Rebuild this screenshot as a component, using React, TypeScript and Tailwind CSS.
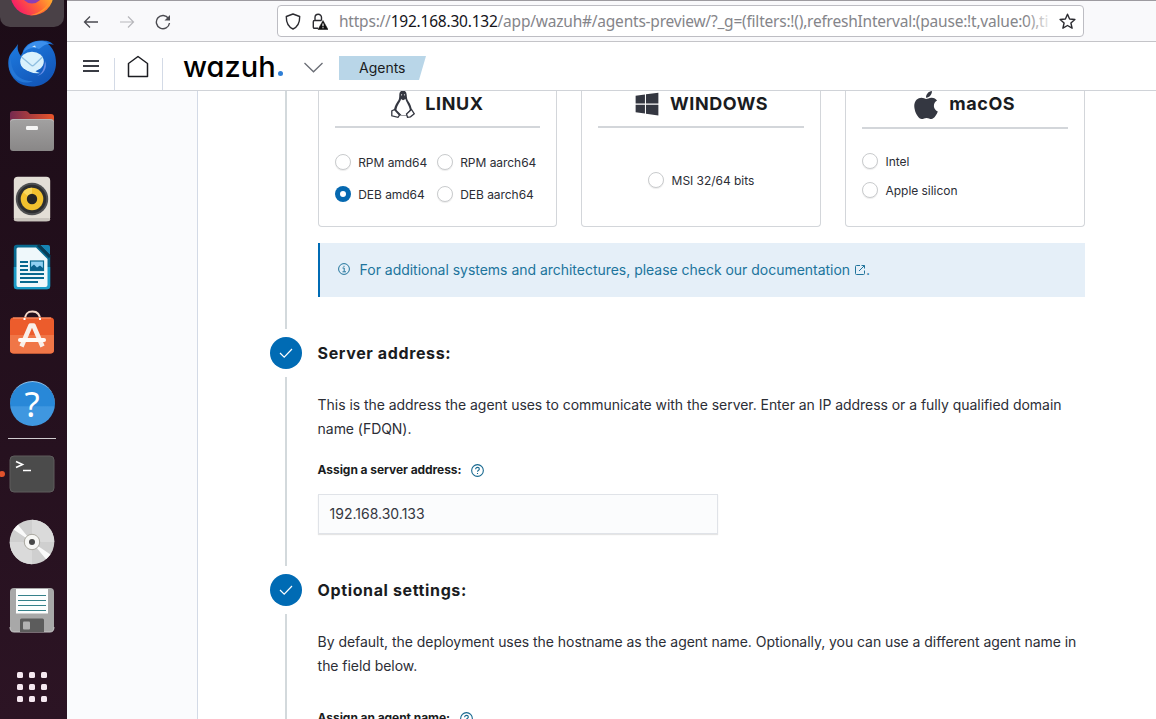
import React from "react";
import { FaApple, FaWindows } from "react-icons/fa";

function DockTile({ children }: { children: React.ReactNode }) {
  return <div className="flex h-[68px] w-16 shrink-0 items-center justify-center">{children}</div>;
}

function FirefoxIcon() {
  return (
    <svg className="h-[44px] w-[44px] shrink-0" viewBox="0 0 44 44">
      <defs>
        <linearGradient id="ff" x1="0.9" y1="0.4" x2="0.15" y2="0.95">
          <stop offset="0" stopColor="#ffbd2e" />
          <stop offset="0.45" stopColor="#ff6a33" />
          <stop offset="1" stopColor="#f5156c" />
        </linearGradient>
      </defs>
      <circle cx="22" cy="22" r="21.500" fill="url(#ff)" />
      <path d="M42 26C38 38 28 43.500 20 43.300C32 41 38 33 42 26Z" fill="#ff9a2c" />
      <circle cx="22" cy="21" r="10.500" fill="#8a3fb5" />
    </svg>
  );
}

function ThunderbirdIcon() {
  return (
    <svg className="h-12 w-12" viewBox="0 0 48 48">
      <defs>
        <linearGradient id="tb" x1="0" y1="0" x2="0.6" y2="1">
          <stop offset="0" stopColor="#1f7fe4" />
          <stop offset="1" stopColor="#1256b8" />
        </linearGradient>
      </defs>
      <path d="M10 5C8 9 4 12 2 16C-1 22 0 31 4 37C8 44 16 47.500 24 47.500C38 47.500 48 37 48 24C48 15 45 9 40 5C42 5 44 5 46 6C42 2 38 1.500 33 1.500C25 1.500 18 5 15 12C15 14 13 15 13 17C10 13 9 10 10 5Z" fill="url(#tb)" />
      <path d="M15 14C18 6 25 2 33 2C36 2 39 3 41 5C37 5 34 8 31 10C26 8 19 9 15 14Z" fill="#3b8fec" />
      <path d="M24 7.500L27 6.500L28 8.500Z" fill="#d5ecfa" />
      <path d="M3 18C2 33 12 43 25 42C14 47 2 39 1 27Z" fill="#2577d6" />
      <ellipse cx="24" cy="22.500" rx="11.800" ry="9.800" fill="#d9f1fc" />
      <path d="M13.500 18L23 26C24 27 25 27 26 26L34.500 18" fill="none" stroke="#8fbfe0" strokeWidth="1.300" />
      <path d="M16 29C20 33 26 35 32 34C28 33 27 32 27 31Z" fill="#d9f1fc" />
      <path d="M35 31C36 28 37 25 37 22C40 29 35 36 29 37C33 35 34 33 35 31Z" fill="#6b8fe6" />
    </svg>
  );
}

function FilesIcon() {
  return (
    <svg className="h-[42px] w-[46px]" viewBox="0 0 46 42">
      <defs>
        <linearGradient id="fb" x1="0" x2="1">
          <stop offset="0" stopColor="#75294f" />
          <stop offset="1" stopColor="#e9552a" />
        </linearGradient>
        <linearGradient id="fg" x1="0" y1="0" x2="0" y2="1">
          <stop offset="0" stopColor="#a2a1a1" />
          <stop offset="1" stopColor="#898787" />
        </linearGradient>
      </defs>
      <path d="M1 4Q1 1 4 1H17Q18.500 1 19.500 2.500L21 4H42Q45 4 45 7V20H1Z" fill="url(#fb)" />
      <path d="M1 12Q1 9 4 9H17Q19 9 20.500 9H42Q45 9 45 12V38Q45 41 42 41H4Q1 41 1 38Z" fill="url(#fg)" />
      <path d="M1.500 11.500Q2.500 9.500 5 9.500H41Q43.500 9.500 44.500 11.500" fill="none" stroke="#bdbcbc" strokeWidth="0.800" />
      <rect x="17" y="16" width="12" height="4" rx="1.200" fill="#f5f5f5" />
    </svg>
  );
}

function RhythmboxIcon() {
  return (
    <svg className="h-[46px] w-[38px]" viewBox="0 0 38 46">
      <rect x="0.800" y="0.800" width="36.400" height="44.400" rx="4" fill="#e3ded6" />
      <rect x="0.800" y="42" width="36.400" height="3.200" rx="2" fill="#c9c4bd" />
      <circle cx="19" cy="23" r="16.200" fill="#4f5052" />
      <circle cx="19" cy="23" r="14.300" fill="#2d2e30" />
      <circle cx="19" cy="23" r="11.300" fill="#f2c12e" />
      <path d="M19 23L10 16.200A11.300 11.300 0 0 1 19 11.700Z" fill="#f8d65b" />
      <circle cx="19" cy="23" r="5.200" fill="#252525" />
    </svg>
  );
}

function WriterIcon() {
  return (
    <svg className="h-[46px] w-[38px]" viewBox="0 0 38 46">
      <path d="M4 0.800H25L37.200 13V42Q37.200 45.200 34 45.200H4Q0.800 45.200 0.800 42V4Q0.800 0.800 4 0.800Z" fill="#08698f" />
      <path d="M0.800 23H37.200V42Q37.200 45.200 34 45.200H4Q0.800 45.200 0.800 42Z" fill="#1c9cc7" />
      <path d="M5 3.500H23L34.500 15V41Q34.500 43 32.500 43H5Q3.500 43 3.500 41V5Q3.500 3.500 5 3.500Z" fill="#eff8fb" />
      <path d="M27 1H35Q37 1 37 3V11Z" fill="#1684b5" />
      <path d="M25 1L37 13" stroke="#073c55" strokeWidth="3" />
      <path d="M7 18H15M7 22H15M7 26H15M7 30H31M7 34H31M7 38H25" stroke="#08698f" strokeWidth="2" />
      <rect x="17.500" y="17" width="13" height="9.500" fill="#8ed0f2" stroke="#08698f" strokeWidth="1.200" />
      <path d="M18 26V23L21 20.500L24 23.500L27 21.500L30 24V26Z" fill="#08618c" />
    </svg>
  );
}

function SoftwareIcon() {
  return (
    <svg className="mb-[6px] h-[44px] w-[46px]" viewBox="0 0 46 44">
      <path d="M16 10C16 3 19 1.500 23.500 1.500C28 1.500 31 4 31 10" fill="none" stroke="#f5d8c8" strokeWidth="2" />
      <rect x="1" y="7.500" width="44" height="36" rx="3.500" fill="#ec5c2c" />
      <path d="M1 25H45V39.500Q45 43.500 41 43.500H5Q1 43.500 1 39.500Z" fill="#f07647" />
      <path d="M4 8H42" stroke="#ff9a73" strokeWidth="1" />
      <path d="M15.500 8V10M31 8V10" stroke="#fff" strokeWidth="2" />
      <path d="M12.500 36.500L21.500 15.500H24.500L33.500 36.500" fill="none" stroke="#f9efe9" strokeWidth="4.500" strokeLinejoin="round" />
      <path d="M11 30H35" stroke="#fffaf6" strokeWidth="4" strokeLinecap="round" />
    </svg>
  );
}

function HelpIcon() {
  return (
    <div className="flex h-[45px] w-[45px] items-center justify-center rounded-full border-t border-[#8ec2ec] bg-linear-to-b from-[#2888d8] from-55% to-[#3f97e0] to-56%">
      <span className="font-['Noto_Sans'] text-[35px] leading-none text-white">?</span>
    </div>
  );
}

function TerminalIcon() {
  return (
    <svg className="h-[38px] w-[46px]" viewBox="0 0 46 38">
      <rect x="1" y="1" width="44" height="36" rx="4" fill="#4b4b4b" stroke="#5e5d5d" />
      <path d="M7 6.500L13.500 9.500L7 12.500" fill="none" stroke="#fff" strokeWidth="1.600" />
      <path d="M14 15.500H22" stroke="#fff" strokeWidth="1.500" />
    </svg>
  );
}

function DiscIcon() {
  return (
    <svg className="h-[46px] w-[46px]" viewBox="0 0 46 46">
      <circle cx="23" cy="23" r="22.300" fill="#cfcfcf" />
      <path d="M23 23L23 0.700A22.300 22.300 0 0 1 45.300 23Z" fill="#dadada" />
      <path d="M23 23L23 45.300A22.300 22.300 0 0 1 .7 23Z" fill="#dadada" />
      <path d="M23 23L4.500 10.500L9 5.800ZM23 23L41.500 35.500L37 40.200Z" fill="#fafafa" />
      <circle cx="23" cy="23" r="7.700" fill="#f7f7f5" stroke="#a9a79f" strokeWidth="1" />
      <circle cx="23" cy="23" r="3" fill="#484848" />
    </svg>
  );
}

function FloppyIcon() {
  return (
    <svg className="h-[46px] w-[46px]" viewBox="0 0 46 46">
      <rect x="1" y="1" width="44" height="44" rx="4" fill="#a8a8a8" />
      <path d="M1 40Q1 45 5 45H41Q45 45 45 40" fill="none" stroke="#c6c6c6" />
      <rect x="7" y="2" width="32" height="24.500" fill="#fcfefe" />
      <path d="M9 8.500H37M9 13.500H37M9 18.500H37M9 23.500H37" stroke="#34818a" strokeWidth="1" />
      <path d="M11 45V33Q11 31.500 12.500 31.500H33.500Q35 31.500 35 33V45Z" fill="#5c5c5c" />
      <rect x="14" y="34.500" width="7" height="8" rx="1" fill="#b2b2b2" />
    </svg>
  );
}

function Dock() {
  return (
    <aside className="relative flex h-full w-[67px] shrink-0 flex-col bg-linear-to-b from-[#1c0c17] to-[#2c1424]">
      <div className="h-[29px] w-16 shrink-0">
        <div className="flex h-[27px] items-end justify-center overflow-hidden rounded-b-[10px] bg-[#4a4147] pb-[11px]">
          <FirefoxIcon />
        </div>
      </div>
      <DockTile><ThunderbirdIcon /></DockTile>
      <DockTile><FilesIcon /></DockTile>
      <DockTile><RhythmboxIcon /></DockTile>
      <DockTile><WriterIcon /></DockTile>
      <DockTile><SoftwareIcon /></DockTile>
      <DockTile><HelpIcon /></DockTile>
      <div className="mx-2 mt-px mb-px h-px w-12 shrink-0 bg-[#d0cbce]" />
      <div className="relative">
        <DockTile><TerminalIcon /></DockTile>
        <span className="absolute top-[31px] -left-px h-1.5 w-1.5 rounded-full bg-[#e2522c]" />
      </div>
      <DockTile><DiscIcon /></DockTile>
      <DockTile><FloppyIcon /></DockTile>
      <div className="mt-[28px] ml-[17px] grid w-[30px] grid-cols-3 gap-1.5">
        {Array.from({ length: 9 }, (_, i) => (
          <span key={i} className="h-1.5 w-1.5 rounded-[1.5px] bg-[#f5e8f0]" />
        ))}
      </div>
    </aside>
  );
}

function BrowserBar() {
  return (
    <div className="flex h-[42px] shrink-0 items-center border-t border-b border-t-[#9d9ba0] border-b-[#c4c4c8] bg-[#f9f9fb]">
      <svg className="mt-0.5 ml-4 h-4 w-4" viewBox="0 0 16 16" fill="none" stroke="#4a4a50" strokeWidth="1.300">
        <path d="M15 8H1.500M7 2.500L1.500 8L7 13.500" />
      </svg>
      <svg className="mt-0.5 ml-5 h-4 w-4" viewBox="0 0 16 16" fill="none" stroke="#b7b7bb" strokeWidth="1.200">
        <path d="M1 8H14.500M9 2.500L14.500 8L9 13.500" />
      </svg>
      <svg className="mt-0.5 ml-5 h-4 w-4" viewBox="0 0 16 16" fill="none" stroke="#4a4a50" strokeWidth="1.400">
        <path d="M13.500 4.500A6.600 6.600 0 1 0 14.500 9" />
        <path d="M15 1V6.500H9.500Z" fill="#4a4a50" stroke="none" />
      </svg>
      <div className="ml-[106px] flex h-8 w-[807px] items-center rounded-[4px] border border-[#bdbdc3] bg-white">
        <svg className="ml-[7px] h-[17px] w-4 shrink-0" viewBox="0 0 16 17" fill="none" stroke="#2b2b30" strokeWidth="1.400">
          <path d="M8 1L14.700 3.500C14.800 9.500 13.500 13.500 8 16C2.500 13.500 1.200 9.500 1.300 3.500Z" strokeLinejoin="round" />
        </svg>
        <svg className="ml-[11px] h-[17px] w-4 shrink-0" viewBox="0 0 16 17">
          <path d="M6 15.300H2.500Q1.300 15.300 1.300 14V8.700Q1.300 7.500 2.500 7.500H9.500M3 7.500V4.500A3.200 3.200 0 0 1 9.500 4.500V7.500" fill="none" stroke="#2b2b30" strokeWidth="1.400" />
          <path d="M11 7.500L16 16.500H6Z" fill="#111" stroke="#111" strokeLinejoin="round" strokeWidth="0.500" />
          <path d="M11 10.500V13.200M11 14.200V15.200" stroke="#fff" strokeWidth="1.200" />
        </svg>
        <div className="relative mt-0.5 ml-[11px] w-[715px] overflow-hidden font-['Noto_Sans'] text-[15.5px] tracking-[-0.22px] whitespace-nowrap text-[#85858a]">
          <span>https://</span>
          <span className="text-[#15141a]">192.168.30.132</span>
          <span>/app/wazuh#/agents-preview/?_g=(filters:!(),refreshInterval:(pause:!t,value:0),ti</span>
          <span className="absolute inset-y-0 right-0 w-7 bg-linear-to-r from-transparent to-white" />
        </div>
        <svg className="ml-[5px] h-[17px] w-[17px] shrink-0" viewBox="0 0 17 17" fill="none" stroke="#2b2b30" strokeWidth="1.400" strokeLinejoin="round">
          <path d="M8.500 1.200L10.600 6L15.900 6.500L11.900 10L13.100 15.200L8.500 12.500L3.900 15.200L5.100 10L1.100 6.500L6.400 6Z" />
        </svg>
      </div>
    </div>
  );
}

function AppHeader() {
  return (
    <header className="flex h-[49px] shrink-0 border-b border-[#d0d3d8] bg-white">
      <div className="flex w-12 justify-center pt-[18px]">
        <div className="flex h-3 w-4 flex-col justify-between">
          <span className="h-0.5 bg-[#3a3c44]" />
          <span className="h-0.5 bg-[#3a3c44]" />
          <span className="h-0.5 bg-[#3a3c44]" />
        </div>
      </div>
      <div className="-ml-px mt-4 h-8 w-px bg-[#d3dae6]" />
      <div className="flex w-[47px] justify-center pt-[13px] pr-0.5">
        <svg className="h-[23px] w-[22px]" viewBox="0 0 22 23" fill="none" stroke="#1c1d22" strokeWidth="1.500">
          <path d="M1.500 8.500L11 1.500L20.500 8.500V21.500H1.500Z" strokeLinejoin="round" />
        </svg>
      </div>
      <div className="mt-4 h-8 w-px bg-[#d3dae6]" />
      <div className="ml-5 flex w-[100px] items-center pt-px font-['Inter'] text-[29px] leading-none font-medium text-black [font-feature-settings:'cv11']">
        <span>wazuh</span>
        <span className="mt-[13px] ml-0.5 h-[5px] w-[5px] rounded-full bg-[#2f7fd6]" />
      </div>
      <svg className="mt-5 ml-[21px] h-[11px] w-[19px]" viewBox="0 0 19 11" fill="none" stroke="#6a6d75" strokeWidth="1.300">
        <path d="M0.500 1L9.500 9.800L18.500 1" />
      </svg>
      <div className="mt-[14px] ml-4 flex h-6 w-[87px] items-center bg-[#b9d6e8] pb-0.5 pl-5 text-[14px] text-[#1a1c21] [clip-path:polygon(0_0,100%_0,calc(100%-7px)_100%,0_100%)]">
        Agents
      </div>
    </header>
  );
}

function Radio({ label, checked = false }: { label: string; checked?: boolean }) {
  return (
    <label className="flex h-4 items-center gap-[7.6px] text-[12px] tracking-[-0.04px] whitespace-nowrap text-[#2c2e36]">
      {checked ? (
        <span className="flex h-4 w-4 shrink-0 items-center justify-center rounded-full bg-[#0568b0]">
          <span className="h-1.5 w-1.5 rounded-full bg-white" />
        </span>
      ) : (
        <span className="h-4 w-4 shrink-0 rounded-full border border-[#c9cbcd] bg-white shadow-[0_1px_1px_rgba(0,0,0,0.08)]" />
      )}
      <span className="pt-0.5">{label}</span>
    </label>
  );
}

function TuxIcon() {
  return (
    <svg className="h-[28px] w-6" viewBox="0 0 24 28">
      <path d="M12 0.500C9.500 0.500 8.300 2.500 8.300 5C8.300 8 8 10 6.200 12C4.200 15 3 18 3 21L8 25.500H16.500L20.800 20.500C20.500 17 19.500 14 17.500 11.500C16 9.500 15.800 7 15.700 5C15.500 2.500 14.500 0.500 12 0.500Z" fill="#343741" />
      <path d="M10 9C10 11.500 5.800 15 5.500 20L10.500 25H15L18.800 20C18.500 16 14.800 11.500 14.500 9L12 10.300Z" fill="#fff" />
      <path d="M3.500 19.500L8.500 25L7 27.300L0.800 25.800V21Z" fill="#fff" stroke="#343741" strokeWidth="1.300" />
      <path d="M20.500 19.500L15.500 24L16.500 27.300L19.500 26.800L23.300 23.800Z" fill="#fff" stroke="#343741" strokeWidth="1.300" />
      <circle cx="10.600" cy="4.800" r="0.600" fill="#fff" />
      <circle cx="13.500" cy="4.800" r="0.600" fill="#fff" />
    </svg>
  );
}

function OsCard({ icon, name, children }: { icon: React.ReactNode; name: string; children: React.ReactNode }) {
  return (
    <section className="flex h-[136px] flex-1 flex-col rounded-b-[4px] border border-t-0 border-[#d3d6da] px-4">
      <div className="flex h-[35px] shrink-0 justify-center text-[18px] leading-[26px] font-bold tracking-[0.55px] text-[#1a1c21]">
        {icon}
        <h3>{name}</h3>
      </div>
      {children}
    </section>
  );
}

function Step({ done, title, children, last }: { done?: boolean; title?: string; children: React.ReactNode; last?: boolean }) {
  return (
    <div className="flex gap-[15.6px]">
      <div className="flex w-8 shrink-0 flex-col items-center">
        {done && (
          <span className="mb-2 flex h-8 w-8 shrink-0 items-center justify-center rounded-full bg-[#006bb4]">
            <svg className="h-4 w-4" viewBox="0 0 16 16" fill="none" stroke="#fff" strokeWidth="1.200">
              <path d="M2 8L6.200 12.200L14 4" />
            </svg>
          </span>
        )}
        <span className={last ? "w-0.5 flex-1 bg-[#d3d9dc]" : "mb-2 w-0.5 flex-1 bg-[#d3d9dc]"} />
      </div>
      <div className="w-[767px]">
        {title && <h2 className="h-8 text-[16px] leading-8 font-bold tracking-[0.62px] text-[#1a1c21]">{title}</h2>}
        {children}
      </div>
    </div>
  );
}

function HelpMark() {
  return (
    <svg className="h-[13px] w-[13px]" viewBox="0 0 12 12" fill="none" stroke="#17688f" strokeWidth="1">
      <circle cx="6" cy="6" r="5.400" />
      <path d="M4.300 4.800C4.300 3.700 5 3.100 6 3.100S7.700 3.700 7.700 4.600C7.700 5.800 6 5.800 6 7.200M6 8.200V9.200" />
    </svg>
  );
}

function FieldLabel({ text }: { text: string }) {
  return (
    <div className="flex h-4 items-center gap-2.5 text-[12px] leading-4 font-bold tracking-[-0.06px] text-[#1a1c21]">
      <span>{text}</span>
      <HelpMark />
    </div>
  );
}

export default function App() {
  return (
    <div className="flex h-[719px] w-[1156px] overflow-hidden bg-white font-['Inter',sans-serif]">
      <Dock />
      <div className="flex min-w-0 flex-1 flex-col">
        <BrowserBar />
        <AppHeader />
        <div className="flex min-h-0 flex-1">
          <div className="w-[131px] shrink-0 border-r border-[#d3dae6] bg-[#fafbfd]" />
          <main className="flex-1 overflow-hidden pl-[72px]">
            <Step>
              <div className="flex gap-6">
                <OsCard name="LINUX" icon={<span className="mr-2.5 -mt-px"><TuxIcon /></span>}>
                  <div className="border-t-2 border-[#d3d6da]" />
                  <div className="mt-[26px] grid grid-cols-[102px_1fr] gap-y-4">
                    <Radio label="RPM amd64" />
                    <Radio label="RPM aarch64" />
                    <Radio label="DEB amd64" checked />
                    <Radio label="DEB aarch64" />
                  </div>
                </OsCard>
                <OsCard name="WINDOWS" icon={<FaWindows className="mr-2.5 h-[26px] w-[26px] text-[#343741]" />}>
                  <div className="border-t-2 border-[#d3d6da]" />
                  <div className="mt-11 flex justify-center">
                    <Radio label="MSI 32/64 bits" />
                  </div>
                </OsCard>
                <OsCard name="macOS" icon={<FaApple className="-mt-0.5 mr-[7px] -ml-1 h-8 w-8 text-[#343741]" />}>
                  <div className="mt-px border-t-2 border-[#d3d6da]" />
                  <div className="mt-6 flex flex-col gap-[13px]">
                    <Radio label="Intel" />
                    <Radio label="Apple silicon" />
                  </div>
                </OsCard>
              </div>
              <div className="mt-4 mb-10 flex h-[54px] items-center border-l-2 border-[#006bb4] bg-[#e5eff8] pl-[18.4px] text-[14px] tracking-[-0.025px] text-[#20749c]">
                <svg className="mr-[9.6px] mb-0.5 h-3 w-3" viewBox="0 0 12 12" fill="none" stroke="#20749c" strokeWidth="1">
                  <circle cx="6" cy="6" r="5.400" />
                  <path d="M4.500 5H6.200V8.500M4.500 8.800H8M6 2.800V3.900" />
                </svg>
                <span className="pb-0.5">For additional systems and architectures, please check our documentation</span>
                <svg className="ml-1 h-3 w-3" viewBox="0 0 12 12" fill="none" stroke="#20749c" strokeWidth="1">
                  <path d="M6 1.500H2.500Q1.500 1.500 1.500 2.500V9.500Q1.500 10.500 2.500 10.500H9.500Q10.500 10.500 10.500 9.500V6.500M7.500 1.500H10.500V4.500M10.500 1.500L5 7" />
                </svg>
                <span className="pb-0.5">.</span>
              </div>
            </Step>
            <Step done title="Server address:">
              <p className="pt-6 text-[14px] leading-6 tracking-[-0.047px] whitespace-nowrap text-[#2c2e36]">
                This is the address the agent uses to communicate with the server. Enter an IP address or a fully qualified domain<br />
                name (FDQN).
              </p>
              <div className="mt-[21px]"><FieldLabel text="Assign a server address:" /></div>
              <div className="mt-4 mb-10 flex h-10 w-[400px] items-center border border-[#e0e3e8] bg-[#fbfcfd] pb-0.5 pl-[11px] text-[14px] text-[#343741] shadow-[0_1px_1px_rgba(0,0,0,0.1)]">
                192.168.30.133
              </div>
            </Step>
            <Step done last title="Optional settings:">
              <p className="pt-6 text-[14px] leading-6 tracking-[-0.047px] whitespace-nowrap text-[#2c2e36]">
                By default, the deployment uses the hostname as the agent name. Optionally, you can use a different agent name in<br />
                the field below.
              </p>
              <div className="mt-8"><FieldLabel text="Assign an agent name:" /></div>
            </Step>
          </main>
        </div>
      </div>
    </div>
  );
}
